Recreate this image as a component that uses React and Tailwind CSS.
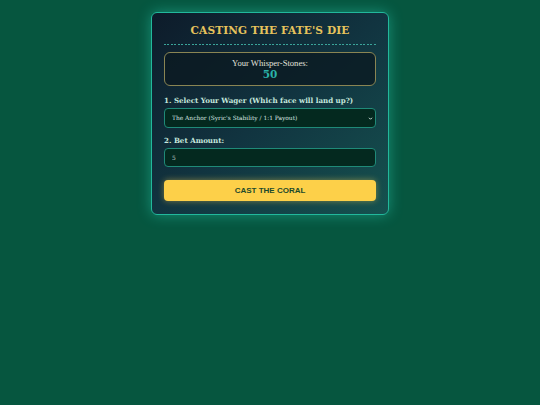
import { useState } from 'react';

const serif = '"DejaVu Serif", "Liberation Serif", serif';
const times = '"Liberation Serif", "DejaVu Serif", serif';

export default function App() {
  const [wager, setWager] = useState('anchor');
  const [bet, setBet] = useState('5');

  return (
    <div className="min-h-screen w-full bg-[#06563f] flex justify-center items-start pt-3" style={{ fontFamily: serif }}>
      <div className="w-[238px] h-[203px] flex flex-col rounded-md border-[1.5px] border-[#22b89c] bg-gradient-to-br from-[#0d1b2a] via-[#113440] to-[#15524f] shadow-[0_0_14px_rgba(45,212,191,0.45)] px-[12px] pt-[12px]">
        <h1 className="h-[19px] leading-[11px] text-center text-[#e6c35c] font-bold text-[10.6px] tracking-[0.01em]">
          CASTING THE FATE'S DIE
        </h1>
        <div className="h-px bg-[repeating-linear-gradient(90deg,#3aa59a_0_2px,transparent_2px_3.5px)]" />

        <div className="mt-[7px] h-[34px] rounded-md border border-[#8a8553] bg-[#0b1a22]/80 flex flex-col items-center justify-center">
          <div className="text-[8.6px] text-[#e2e2dc] leading-[10px]" style={{ fontFamily: times }}>Your Whisper-Stones:</div>
          <div className="text-[10.5px] font-bold text-[#2ab3aa] leading-[12px]">50</div>
        </div>

        <div className="mt-[10px] h-[10px] leading-[10px] text-[7.1px] font-bold text-[#c6e8de] whitespace-nowrap">
          1. Select Your Wager (Which face will land up?)
        </div>
        <div className="relative mt-[2px] h-[20px]">
          <select
            value={wager}
            onChange={(e) => setWager(e.target.value)}
            className="block w-full h-[20px] appearance-none rounded-sm border border-[#1f8a78] bg-[#04291f] text-[#d9e6e0] text-[5.9px] pl-[7px] outline-none"
            style={{ fontFamily: serif }}
          >
            <option value="anchor">The Anchor (Syric's Stability / 1:1 Payout)</option>
          </select>
          <svg className="absolute right-[3px] top-[8px] w-[5px] h-[5px] pointer-events-none" viewBox="0 0 10 10" fill="none" stroke="#cfe3dc" strokeWidth="2">
            <path d="M2 3.5 L5 6.5 L8 3.5" />
          </svg>
        </div>

        <div className="mt-[8px] h-[10px] leading-[10px] text-[7.1px] font-bold text-[#c6e8de]">
          2. Bet Amount:
        </div>
        <input
          type="text"
          value={bet}
          onChange={(e) => setBet(e.target.value)}
          className="block mt-[2px] w-full h-[19px] rounded-sm border border-[#1f8a78] bg-[#04291f] text-[#c9d8d2] text-[5.9px] pl-[7px] outline-none"
          style={{ fontFamily: serif }}
        />

        <button className="mt-[13px] w-full h-[21px] rounded-sm bg-[#fdd049] text-[#1d4a2c] text-[8px] font-bold shadow-[0_0_6px_rgba(253,208,73,0.45)]" style={{ fontFamily: '"Liberation Sans", Arial, sans-serif' }}>
          CAST THE CORAL
        </button>
      </div>
    </div>
  );
}
